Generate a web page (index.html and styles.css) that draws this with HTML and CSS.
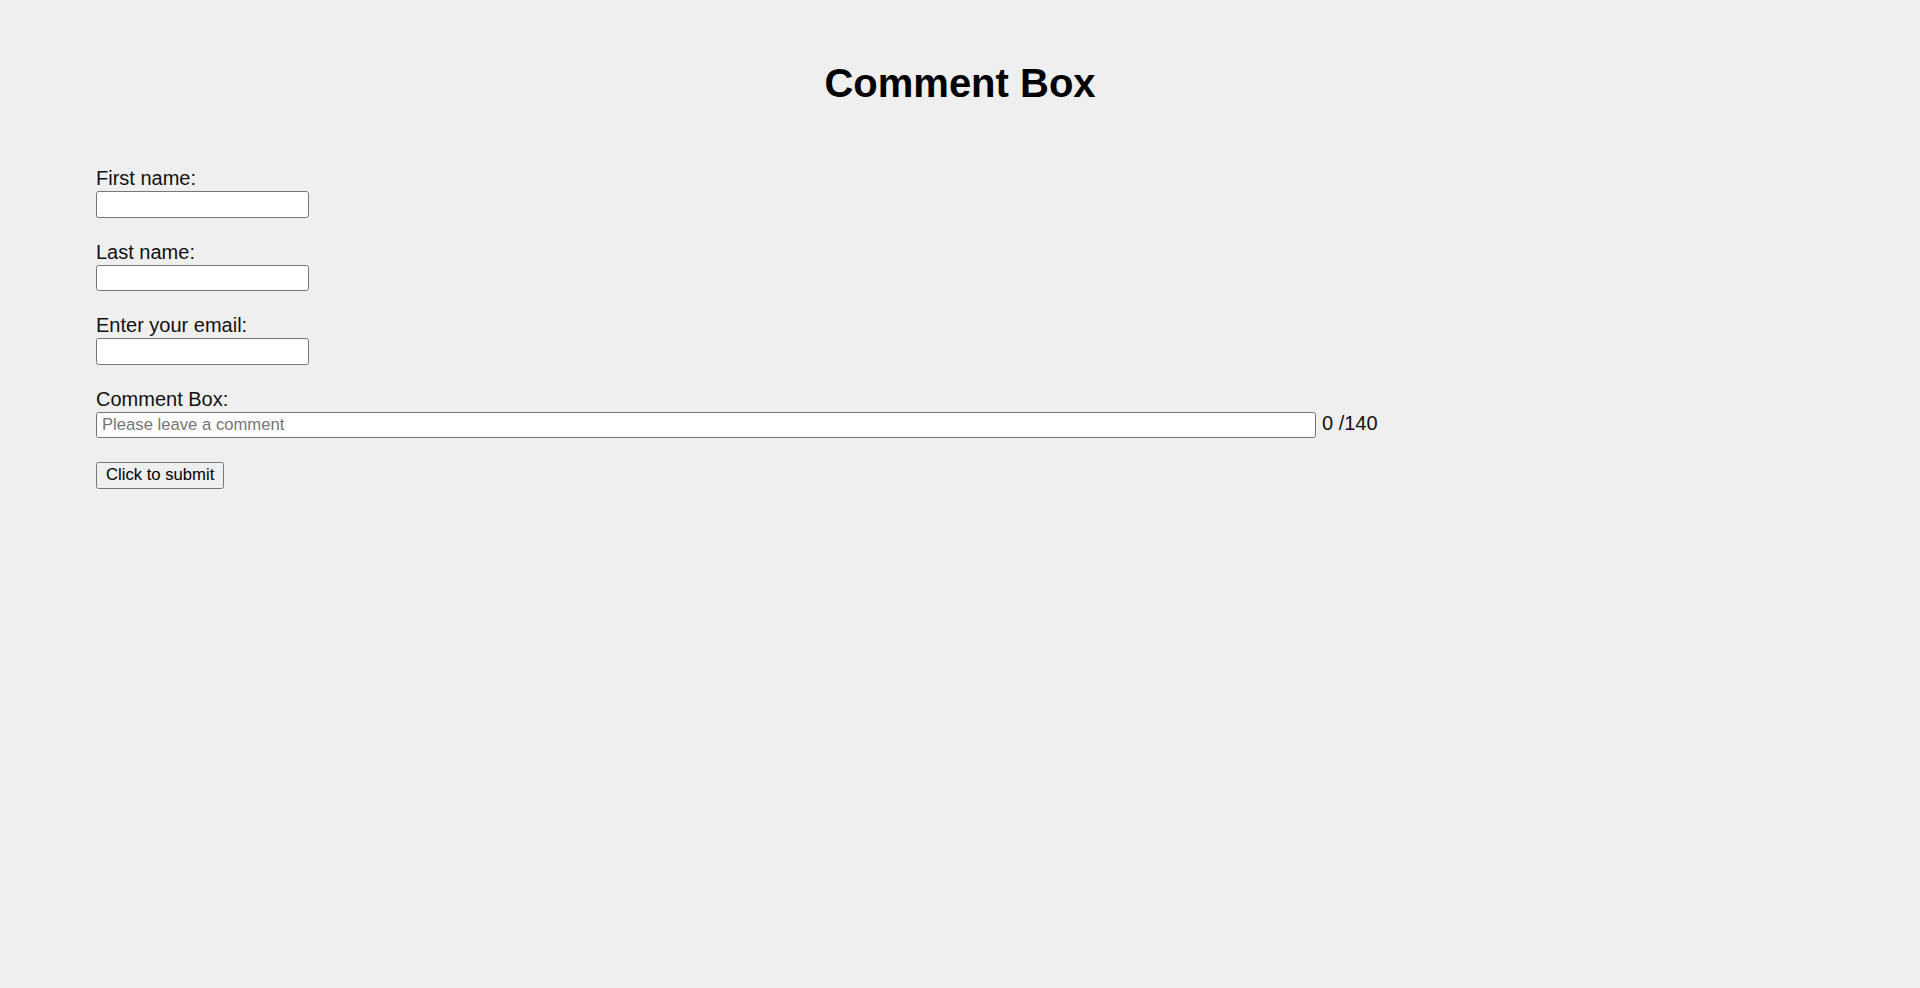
FILE: index.html
```html
<!DOCTYPE html>
<html lang="en">
<head>
<meta charset="utf-8">
<title>Comment Box</title>
<link rel="stylesheet" href="styles.css">
</head>
<body>
<main class="page">
  <h1 class="title">Comment Box</h1>
  <form class="form">
    <div class="field">
      <label class="label" for="first">First name:</label>
      <input class="input" type="text" id="first">
    </div>
    <div class="field">
      <label class="label" for="last">Last name:</label>
      <input class="input" type="text" id="last">
    </div>
    <div class="field">
      <label class="label" for="email">Enter your email:</label>
      <input class="input" type="email" id="email">
    </div>
    <div class="field">
      <label class="label" for="comment">Comment Box:</label>
      <div class="comment-row">
        <input class="input input-wide" type="text" id="comment" placeholder="Please leave a comment">
        <span class="counter">0 /140</span>
      </div>
    </div>
    <div class="field field-actions">
      <button class="submit" type="button">Click to submit</button>
    </div>
  </form>
</main>
</body>
</html>
```

FILE: styles.css
```css
html, body {
  margin: 0;
  padding: 0;
  background: #efefef;
}

body {
  font-family: "Liberation Sans", Arial, sans-serif;
  color: #000;
}

.page {
  padding-top: 60px;
}

.title {
  margin: 0 0 60px;
  font-size: 40px;
  line-height: 46px;
  font-weight: bold;
  text-align: center;
}

.form {
  display: flex;
  flex-direction: column;
  gap: 22px;
  padding-left: 96px;
}

.field {
  display: flex;
  flex-direction: column;
  align-items: flex-start;
}

.field-actions {
  margin-top: 2px;
}

.label {
  font-size: 20px;
  line-height: 24px;
  color: #111;
}

.input {
  box-sizing: border-box;
  width: 213px;
  height: 26.5px;
  margin: 1px 0 0;
  padding: 1px 5px;
  border: 1px solid #767676;
  border-radius: 2.5px;
  background: #fff;
  font-family: "Liberation Sans", Arial, sans-serif;
  font-size: 16.67px;
  color: #000;
  outline: none;
}

.input::placeholder {
  color: #757575;
}

.comment-row {
  display: flex;
  align-items: center;
  gap: 6px;
}

.input-wide {
  width: 1220px;
}

.counter {
  font-size: 20px;
  line-height: 24px;
  color: #111;
  margin-top: -2px;
}

.submit {
  box-sizing: border-box;
  height: 26.5px;
  padding: 0 9px;
  border: 1px solid #767676;
  border-radius: 2.5px;
  background: #efefef;
  font-family: "Liberation Sans", Arial, sans-serif;
  font-size: 16.67px;
  color: #000;
}
```
